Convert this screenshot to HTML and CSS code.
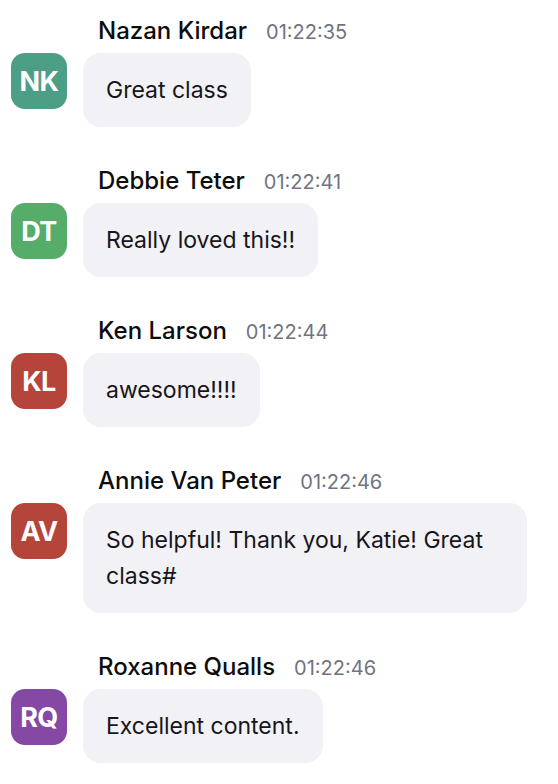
FILE: index.html
```html
<!doctype html>
<html>

<head>
<title>Chat</title>

<link rel="stylesheet" href="styles.css">
</head>

<body>

<div class="chat">
	<div class="msg">
		<div class="avatar green">NK</div>
		<div class="body">
			<div class="meta"><span class="name">Nazan Kirdar</span><span class="time">01:22:35</span></div>
			<div class="bubble">Great class</div>
		</div>
	</div>
	<div class="msg">
		<div class="avatar lime">DT</div>
		<div class="body">
			<div class="meta"><span class="name">Debbie Teter</span><span class="time">01:22:41</span></div>
			<div class="bubble">Really loved this!!</div>
		</div>
	</div>
	<div class="msg">
		<div class="avatar red">KL</div>
		<div class="body">
			<div class="meta"><span class="name">Ken Larson</span><span class="time">01:22:44</span></div>
			<div class="bubble">awesome!!!!</div>
		</div>
	</div>
	<div class="msg">
		<div class="avatar red">AV</div>
		<div class="body">
			<div class="meta"><span class="name">Annie Van Peter</span><span class="time">01:22:46</span></div>
			<div class="bubble">So helpful! Thank you, Katie! Great class#</div>
		</div>
	</div>
	<div class="msg">
		<div class="avatar purple">RQ</div>
		<div class="body">
			<div class="meta"><span class="name">Roxanne Qualls</span><span class="time">01:22:46</span></div>
			<div class="bubble">Excellent content.</div>
		</div>
	</div>
</div>

</body>

</html>
```

FILE: styles.css
```css
html,body {
	margin:0;
	background-color:#fff;
	color:#111;
	font-family:Inter, "Noto Sans", sans-serif;
}
.chat {
	display:flex;
	flex-direction:column;
	gap:39px;
	padding:16px 31px 0 11px;
}
.msg {
	position:relative;
	padding-left:72px;
}
.body {
	display:flex;
	flex-direction:column;
	align-items:flex-start;
}
.avatar {
	position:absolute;
	left:0;
	top:37px;
	width:56px;
	height:56px;
	border-radius:14px;
	display:flex;
	align-items:center;
	justify-content:center;
	color:#fff;
	font-weight:700;
	font-size:27px;
	letter-spacing:-0.5px;
}
.green {background-color:#4d9e87;}
.lime {background-color:#56ad6a;}
.red {background-color:#b5453a;}
.purple {background-color:#8549a5;}
.meta {
	display:flex;
	align-items:baseline;
	gap:19px;
	height:30px;
	line-height:30px;
	padding-left:15px;
	margin-bottom:7px;
}
.name {
	font-size:24px;
	font-weight:500;
	color:#0d0d0d;
}
.time {
	font-size:20px;
	color:#6f7480;
}
.bubble {
	background-color:#f1f1f6;
	border-radius:18px;
	padding:19px 23px;
	font-size:23px;
	line-height:36px;
	color:#16161a;
}
```
